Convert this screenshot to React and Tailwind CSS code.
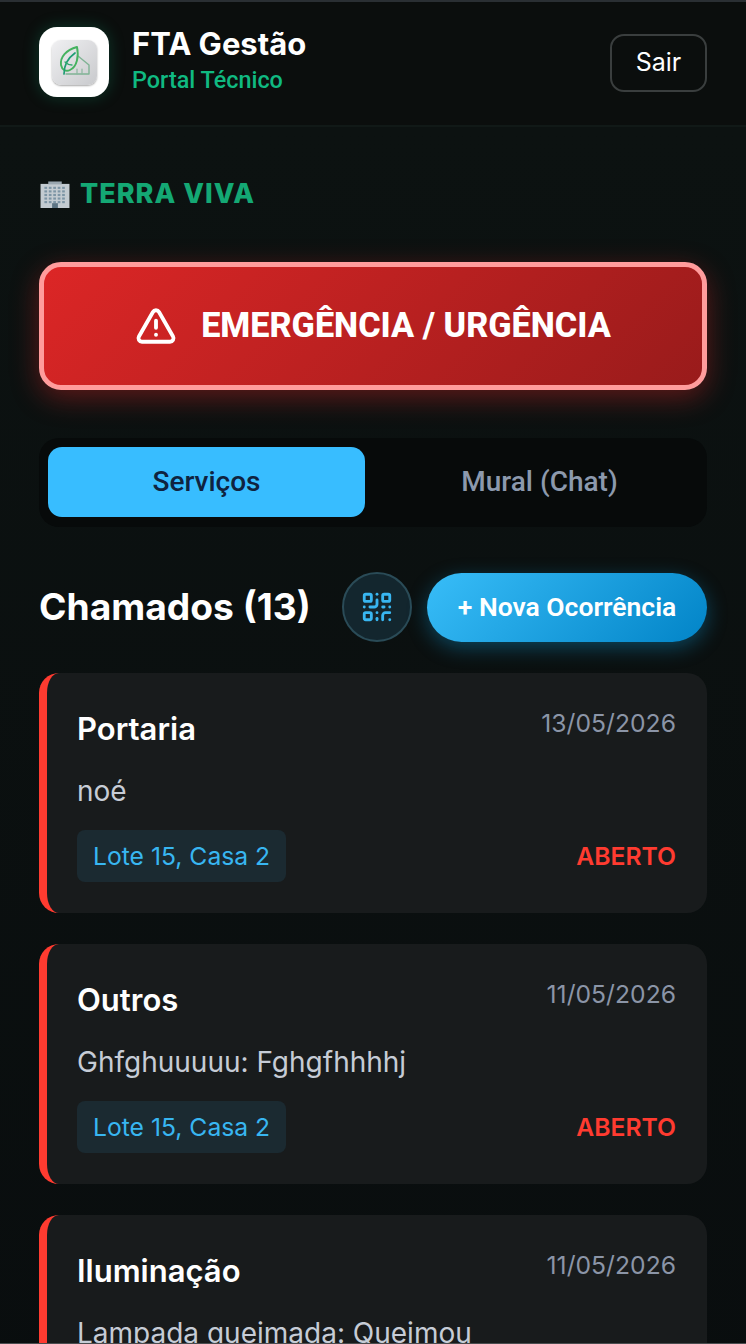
import { TriangleAlert, QrCode } from 'lucide-react'

const tickets = [
  { title: 'Portaria', date: '13/05/2026', text: 'noé' },
  { title: 'Outros', date: '11/05/2026', text: 'Ghfghuuuuu: Fghgfhhhhj' },
  { title: 'Iluminação', date: '11/05/2026', text: 'Lampada queimada: Queimou' },
]

function Logo() {
  return (
    <div className="w-[70px] h-[70px] rounded-[18px] bg-white flex items-center justify-center shadow-[0_0_16px_rgba(16,185,129,0.25)] shrink-0">
      <div className="w-[45px] h-[45px] rounded-[9px] bg-gradient-to-br from-[#f0f0f2] to-[#c9cacd] shadow-[0_1px_2px_rgba(0,0,0,0.35)] flex items-center justify-center">
        <svg viewBox="0 0 45 45" className="w-[45px] h-[45px]" fill="none" strokeLinecap="round" strokeLinejoin="round">
          <path d="M26 16 L37 25 V34 H14" stroke="#7fb394" strokeWidth="1.4" />
          <path d="M25 7 C14 10 8 17 9 25 C10 30 14 32 18 30 C25 27 27 16 25 7 Z" stroke="#45b25f" strokeWidth="1.9" />
          <path d="M23 13 C16 18 12 24 12 34" stroke="#1f9d74" strokeWidth="1.7" />
          <path d="M13 22 C15 24 17 25 20 25" stroke="#2ea86c" strokeWidth="1.3" />
          <path d="M25 34 V29 M30 34 V29" stroke="#8db8a0" strokeWidth="1.2" />
        </svg>
      </div>
    </div>
  )
}

function BuildingIcon() {
  const windows = []
  for (let r = 0; r < 5; r++) {
    for (let c = 0; c < 5; c++) {
      windows.push(<rect key={`${r}-${c}`} x={4 + c * 4.6} y={6 + r * 3.7} width="2.8" height="2.2" fill="#7d95a5" />)
    }
  }
  return (
    <svg viewBox="0 0 30 28" className="w-[30px] h-[27px] shrink-0 ml-[1px]">
      <rect x="0" y="3" width="30" height="25" fill="#c3cbd1" />
      <rect x="8" y="0.5" width="14" height="3" fill="#9aa7b0" />
      {windows}
      <rect x="12" y="23" width="6" height="5" fill="#5d7484" />
    </svg>
  )
}

function TicketCard({ title, date, text }) {
  return (
    <div className="rounded-[20px] bg-[#181b1c] border-l-[8px] border-[#ff3b30] pl-[30px] pr-[31px] pt-[32px] pb-[31px] shrink-0">
      <div className="flex items-start justify-between">
        <h3 className="font-['Inter',sans-serif] text-[31px] leading-[48px] font-semibold text-white">{title}</h3>
        <span className="font-['Inter',sans-serif] text-[24.7px] leading-[36px] text-[#8b95a7]">{date}</span>
      </div>
      <p className="font-['Inter',sans-serif] text-[28px] leading-[40px] text-[#c6ccd6] mt-[18px]">{text}</p>
      <div className="flex items-center justify-between mt-[19px]">
        <span className="font-['Inter',sans-serif] text-[24.7px] leading-[36px] text-[#38b6f1] bg-[#1b2a31] rounded-[8px] px-[16px] py-[8px]">Lote 15, Casa 2</span>
        <span className="font-['Inter',sans-serif] text-[24.7px] leading-[36px] font-semibold text-[#ff3b30]">ABERTO</span>
      </div>
    </div>
  )
}

export default function App() {
  return (
    <div className="w-[746px] h-[1344px] overflow-hidden bg-[#0a0e0e] border-t-2 border-b border-t-[#2a2f33] border-b-[#4a4d4f] flex flex-col">
      <header className="h-[125px] shrink-0 flex items-center justify-between pl-[39px] pr-[39px] pb-[3px] bg-[#0b0e0d] border-b-2 border-[#111917]">
        <div className="flex items-center gap-[23px]">
          <Logo />
          <div className="flex flex-col">
            <span className="font-['Inter',sans-serif] text-[31px] leading-[34px] font-bold text-white">FTA Gestão</span>
            <span className="font-['Roboto',sans-serif] text-[23.4px] leading-[36px] mt-[1px] font-medium text-[#10b981]">Portal Técnico</span>
          </div>
        </div>
        <button className="w-[97px] h-[58px] mt-[1px] rounded-[14px] border-2 border-[#3a3e3e] font-['Inter',sans-serif] text-[25px] text-white">Sair</button>
      </header>

      <main className="flex-1 px-[39px] pt-[50px] flex flex-col bg-gradient-to-b from-[#0c1211] to-[#090d0e]">
        <div className="flex items-center gap-[10px] h-[34px]">
          <BuildingIcon />
          <span className="font-['Inter',sans-serif] text-[27px] font-extrabold tracking-[1px] text-[#14a874]">TERRA VIVA</span>
        </div>

        <button className="mt-[51px] h-[128px] w-full shrink-0 rounded-[22px] border-[5px] border-[#ff9c9c] bg-[linear-gradient(135deg,#dc2626,#991b1b)] shadow-[0_8px_28px_rgba(220,38,38,0.4)] flex items-center justify-center gap-[24px] text-white">
          <TriangleAlert className="w-[42px] h-[42px]" strokeWidth={2.2} />
          <span className="font-['Roboto',sans-serif] text-[34.2px] font-extrabold">EMERGÊNCIA / URGÊNCIA</span>
        </button>

        <div className="mt-[48px] h-[89px] shrink-0 rounded-[20px] bg-[#070a0a] pt-[9px] pb-[10px] px-[9px] flex gap-[16px]">
          <div className="flex-1 rounded-[14px] bg-[#38bdff] flex items-center justify-center font-['Roboto',sans-serif] text-[28px] font-medium text-[#0f2340]">Serviços</div>
          <div className="flex-1 rounded-[14px] flex items-center justify-center font-['Roboto',sans-serif] text-[28px] font-medium text-[#8c99ad]">Mural (Chat)</div>
        </div>

        <div className="mt-[45px] flex items-center justify-between shrink-0">
          <h2 className="font-['Inter',sans-serif] text-[37.2px] font-bold text-white">Chamados (13)</h2>
          <div className="flex items-center gap-[15px]">
            <button className="w-[70px] h-[70px] rounded-full bg-[#13262e] border-2 border-[#2a4b57] flex items-center justify-center text-[#38b6f1]">
              <QrCode className="w-[34px] h-[34px]" strokeWidth={2} />
            </button>
            <button className="w-[280px] h-[69px] rounded-full bg-[linear-gradient(135deg,#38bdf8,#0284c7)] shadow-[0_6px_20px_rgba(14,165,233,0.35)] font-['Roboto',sans-serif] text-[26.5px] font-semibold text-white">+ Nova Ocorrência</button>
          </div>
        </div>

        <div className="mt-[31px] flex flex-col gap-[31px]">
          {tickets.map(t => <TicketCard key={t.title} {...t} />)}
        </div>
      </main>
    </div>
  )
}
